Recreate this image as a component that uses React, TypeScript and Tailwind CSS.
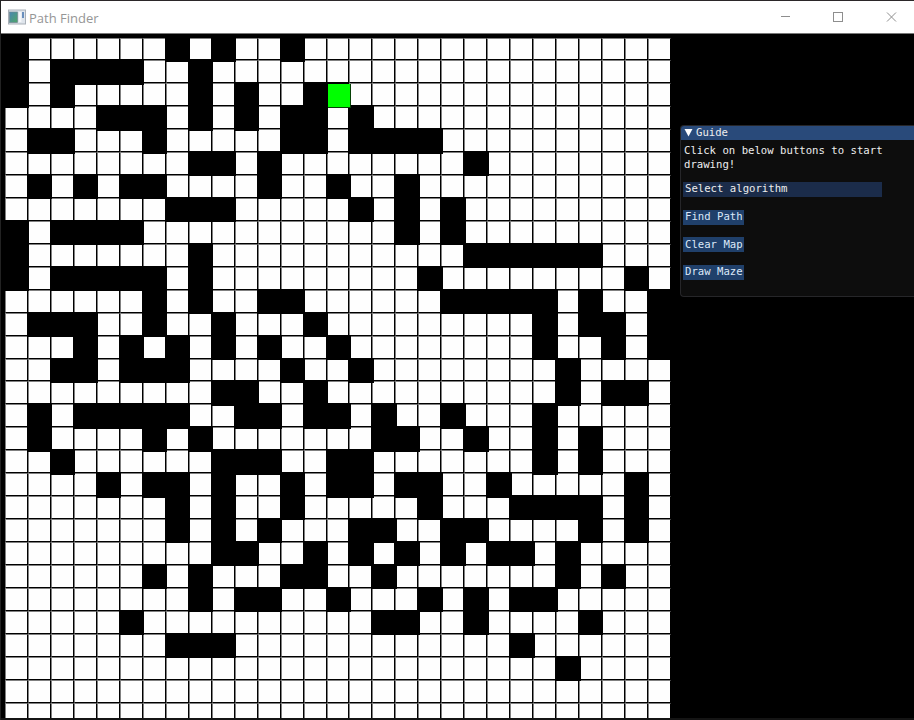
const COLS = 29;
const ROWS = 30;

// Wall column spans for each row of the map, as [first, last].
const WALLS: [number, number][][] = [
  [[0, 0], [7, 7], [9, 9], [12, 12]],
  [[0, 0], [2, 5], [8, 8]],
  [[0, 0], [2, 2], [8, 8], [10, 10], [13, 13]],
  [[4, 6], [8, 8], [10, 10], [12, 13], [15, 15]],
  [[1, 2], [6, 6], [12, 13], [15, 18]],
  [[8, 9], [11, 11], [20, 20]],
  [[1, 1], [3, 3], [5, 6], [11, 11], [14, 14], [17, 17]],
  [[7, 9], [15, 15], [17, 17], [19, 19]],
  [[0, 0], [2, 5], [17, 17], [19, 19]],
  [[0, 0], [8, 8], [20, 25]],
  [[0, 0], [2, 6], [8, 8], [18, 18], [27, 27]],
  [[6, 6], [8, 8], [11, 12], [19, 23], [25, 25], [28, 28]],
  [[1, 3], [6, 6], [9, 9], [13, 13], [23, 23], [25, 26], [28, 28]],
  [[3, 3], [5, 5], [7, 7], [9, 9], [11, 11], [14, 14], [23, 23], [26, 26], [28, 28]],
  [[2, 3], [5, 7], [12, 12], [15, 15], [24, 24]],
  [[9, 10], [13, 13], [24, 24], [26, 27]],
  [[1, 1], [3, 7], [10, 11], [13, 14], [16, 16], [19, 19], [23, 23]],
  [[1, 1], [6, 6], [8, 8], [16, 17], [20, 20], [23, 23], [25, 25]],
  [[2, 2], [9, 11], [14, 15], [23, 23], [25, 25]],
  [[4, 4], [6, 7], [9, 9], [12, 12], [14, 15], [17, 18], [21, 21], [27, 27]],
  [[7, 7], [9, 9], [12, 12], [18, 18], [22, 25], [27, 27]],
  [[7, 7], [9, 9], [11, 11], [15, 16], [19, 20], [25, 25], [27, 27]],
  [[9, 10], [13, 13], [15, 15], [17, 17], [19, 19], [21, 22], [24, 24]],
  [[6, 6], [8, 8], [12, 13], [16, 16], [24, 24], [26, 26]],
  [[8, 8], [10, 11], [14, 14], [18, 18], [20, 20], [22, 23]],
  [[5, 5], [16, 17], [20, 20], [25, 25]],
  [[7, 9], [22, 22]],
  [[24, 24]],
  [],
  [],
];

const START = { row: 2, col: 14 };

function Cell({ row, col }: { row: number; col: number }) {
  const wall = WALLS[row].some(([a, b]) => col >= a && col <= b);
  if (wall) return <div className="z-10 -mb-[1.4px] -ml-px -mr-[1.4px] -mt-px bg-black" />;
  if (row === START.row && col === START.col) {
    return <div className="z-20 -mb-[1.4px] -mr-[1.4px] ml-[1.4px] mt-px border-b border-r border-[#064006] bg-[#00ff00]" />;
  }
  return (
    <div className="border-b border-l border-r border-t border-b-black border-l-[#808080] border-r-black border-t-[#808080] bg-[#fefefe]" />
  );
}

function Board() {
  return (
    <div className="h-[681px] w-[667px] shrink-0 overflow-hidden">
      <div className="grid h-[688px] w-[666px] grid-cols-[repeat(29,minmax(0,1fr))] grid-rows-[repeat(30,minmax(0,1fr))]">
        {Array.from({ length: COLS * ROWS }, (_, i) => (
          <Cell key={i} row={Math.floor(i / COLS)} col={i % COLS} />
        ))}
      </div>
    </div>
  );
}

function TitleBar() {
  return (
    <header className="flex h-[34px] shrink-0 items-center border-b border-[#777] border-t border-t-[#2b2729] bg-white pl-[7px]">
      <svg width="18" height="16" viewBox="0 0 18 16" className="shrink-0">
        <defs>
          <linearGradient id="pane" x1="0" y1="0" x2="1" y2="1">
            <stop offset="0" stopColor="#4a86b4" />
            <stop offset="1" stopColor="#4fa566" />
          </linearGradient>
        </defs>
        <rect x="0.5" y="1" width="17" height="14" fill="#dfe5ec" stroke="#a9b0b8" />
        <rect x="1.5" y="3" width="8" height="10.5" fill="url(#pane)" stroke="#6f8790" strokeWidth="0.7" />
        <rect x="11" y="3" width="2.4" height="10" fill="#f5f7fa" />
        <rect x="14" y="3" width="2" height="6" fill="#6a8fbd" />
      </svg>
      <span className="ml-[3px] mt-[2px] font-['Open_Sans','Noto_Sans',sans-serif] text-[13px] leading-none text-[#969696]">
        Path Finder
      </span>
      <div className="ml-auto flex items-center">
        <svg width="134" height="14" viewBox="0 0 134 14" fill="none" stroke="#8e8e8e" strokeWidth="1">
          <path d="M1 6.5h9" />
          <rect x="53.5" y="2.5" width="9" height="9" />
          <path d="M107 2.5l9 9M116 2.5l-9 9" />
        </svg>
      </div>
    </header>
  );
}

function PanelButton({ label }: { label: string }) {
  return (
    <button className="flex h-[15px] w-[61px] items-center bg-[#20406b] pl-[2px] pt-px text-left leading-none text-[#dce8f8]">
      {label}
    </button>
  );
}

function GuidePanel() {
  return (
    <aside className="mt-[87px] h-[172px] w-[234px] shrink-0 overflow-hidden rounded-l border border-r-0 border-[#262629] bg-[#0d0d0d] font-['DejaVu_Sans_Mono',monospace] text-[10.65px] text-[#ededed]">
      <div className="flex h-[14px] items-center bg-[#294a7a] pl-[3px] leading-none">
        <svg width="9" height="8" viewBox="0 0 9 8" className="mr-[3px]">
          <path d="M0.5 0h8L4.5 7.5z" fill="#fff" />
        </svg>
        <span className="pt-[2px]">Guide</span>
      </div>
      <div className="flex flex-col items-start pl-[2px]">
        <p className="mt-[4px] whitespace-nowrap pl-px leading-[14px]">
          Click on below buttons to start
          <br />
          drawing!
        </p>
        <div className="mt-[10px] flex h-[15px] w-[199px] items-center bg-[#1b2c4a] pl-[2px] pt-px leading-none">
          Select algorithm
        </div>
        <div className="mt-[13px] flex flex-col gap-[12.5px]">
          <PanelButton label="Find Path" />
          <PanelButton label="Clear Map" />
          <PanelButton label="Draw Maze" />
        </div>
      </div>
    </aside>
  );
}

export default function App() {
  return (
    <div className="flex h-[720px] w-[914px] flex-col overflow-hidden border-l border-[#222] bg-black">
      <TitleBar />
      <main className="flex flex-1 justify-between overflow-hidden pl-[4px] pt-[3.5px]">
        <Board />
        <GuidePanel />
      </main>
      <div className="h-[2px] shrink-0 bg-[#141414]" />
    </div>
  );
}
